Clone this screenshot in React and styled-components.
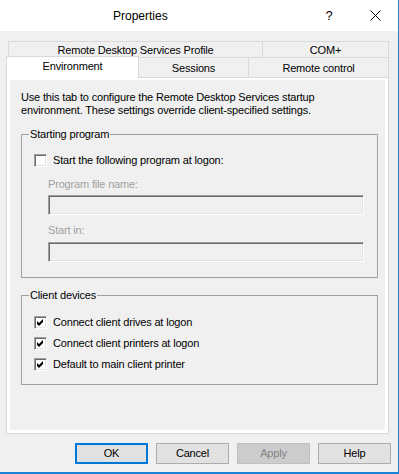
import React from 'react';
import styled, { createGlobalStyle } from 'styled-components';

const Global = createGlobalStyle`
  html, body { margin: 0; padding: 0; background: #f0f0f0; }
  body {
    font-family: "Liberation Sans", Arial, sans-serif;
    font-size: 11px;
    line-height: 13px;
    letter-spacing: -0.17px;
    color: #000;
  }
  * { box-sizing: border-box; }
`;

const Window = styled.div`
  width: 399px;
  height: 474px;
  border-right: 1px solid #1883d7;
  border-bottom: 2px solid #1883d7;
  background: #f0f0f0;
  display: flex;
  flex-direction: column;
`;

const TitleBar = styled.div`
  height: 31px;
  flex: none;
  background: #fff;
  display: flex;
  align-items: center;
`;

const Title = styled.div`
  flex: 1;
  padding-left: 113px;
  font-size: 12px;
  line-height: 14px;
  letter-spacing: 0;
`;

const CaptionButton = styled.div`
  width: 46px;
  height: 31px;
  display: flex;
  align-items: center;
  justify-content: center;
  font-size: 13px;
`;

const Body = styled.div`
  padding: 10px 0 0 6px;
  display: flex;
  flex-direction: column;
`;

const TabRow = styled.div`
  display: flex;
  align-items: flex-end;
  height: ${p => p.$h}px;
  padding-left: ${p => p.$indent}px;
`;

const Tab = styled.div`
  width: ${p => p.$w}px;
  height: ${p => (p.$active ? p.$h + 2 : p.$h)}px;
  margin-left: ${p => (p.$first ? 0 : -1)}px;
  margin-bottom: ${p => (p.$active ? -1 : 0)}px;
  border: 1px solid #d9d9d9;
  border-bottom: none;
  background: ${p => (p.$active ? '#fff' : '#f0f0f0')};
  position: ${p => (p.$active ? 'relative' : 'static')};
  z-index: ${p => (p.$active ? 1 : 'auto')};
  display: flex;
  justify-content: center;
  padding-top: ${p => p.$pt}px;
  white-space: nowrap;
`;

const Panel = styled.div`
  width: 383px;
  height: 357px;
  border: 1px solid #d9d9d9;
  background: #fff;
  padding: 2px 3px 3px 3px;
  display: flex;
`;

const Page = styled.div`
  flex: 1;
  background: #f0f0f0;
  padding: 11px 0 0 11px;
  display: flex;
  flex-direction: column;
`;

const Description = styled.p`
  margin: 0;
  width: 340px;
`;

const GroupBox = styled.fieldset`
  width: 357px;
  margin: ${p => p.$mt}px 0 0 0;
  padding: 0 12px ${p => p.$pb}px 12px;
  border: 1px solid #a0a0a0;
  display: flex;
  flex-direction: column;
  min-width: 0;
`;

const Legend = styled.legend`
  margin-left: -5px;
  padding: 0 1px;
  line-height: 13px;
`;

const CheckRow = styled.label`
  display: flex;
  align-items: center;
  gap: 6px;
  height: 13px;
  margin-top: ${p => p.$mt}px;
`;

const Box = styled.span`
  width: 13px;
  height: 13px;
  flex: none;
  background: #fff;
  border-top: 1px solid #a0a0a0;
  border-left: 1px solid #a0a0a0;
  border-right: 1px solid #fff;
  border-bottom: 1px solid #fff;
  box-shadow: inset 1px 1px 0 #696969, inset -1px -1px 0 #e3e3e3;
  display: flex;
  align-items: center;
  justify-content: center;
`;

const FieldLabel = styled.div`
  margin: ${p => p.$mt}px 0 0 14px;
  color: #a0a0a0;
`;

const Field = styled.div`
  width: 316px;
  height: 20px;
  margin: ${p => p.$mt}px 0 0 14px;
  background: #f0f0f0;
  border-top: 1px solid #a0a0a0;
  border-left: 1px solid #a0a0a0;
  border-right: 1px solid #fff;
  border-bottom: 1px solid #fff;
  box-shadow: inset 1px 1px 0 #696969, inset -1px -1px 0 #e3e3e3;
`;

const ButtonRow = styled.div`
  display: flex;
  justify-content: flex-end;
  gap: 8px;
  margin-top: 9px;
  padding-right: 7px;
`;

const Button = styled.div`
  width: 73px;
  height: 21px;
  display: flex;
  align-items: center;
  justify-content: center;
  background: ${p => (p.$disabled ? '#cccccc' : '#e1e1e1')};
  color: ${p => (p.$disabled ? '#838383' : '#000')};
  border: ${p => (p.$default ? '2px solid #0078d7' : p.$disabled ? '1px solid #bfbfbf' : '1px solid #adadad')};
`;

const Check = ({ checked }) => (
  <Box>
    {checked && (
      <svg width="9" height="9" viewBox="0 0 9 9">
        <polygon points="1,3 3,5 7,1 7,4 3,8 1,6" fill="#000" />
      </svg>
    )}
  </Box>
);

export default function App() {
  return (
    <>
      <Global />
      <Window>
        <TitleBar>
          <Title>Properties</Title>
          <CaptionButton>?</CaptionButton>
          <CaptionButton>
            <svg width="11" height="11" viewBox="0 0 11 11">
              <path d="M0.5 0.5 L10.5 10.5 M10.5 0.5 L0.5 10.5" stroke="#000" strokeWidth="1" />
            </svg>
          </CaptionButton>
        </TitleBar>
        <Body>
          <TabRow $h={16} $indent={2}>
            <Tab $first $w={255} $h={16} $pt={2}>Remote Desktop Services Profile</Tab>
            <Tab $w={127} $h={16} $pt={2}>COM+</Tab>
          </TabRow>
          <TabRow $h={20} $indent={0}>
            <Tab $first $active $w={133} $h={20} $pt={3}>Environment</Tab>
            <Tab $w={111} $h={20} $pt={4}>Sessions</Tab>
            <Tab $w={141} $h={20} $pt={4}>Remote control</Tab>
          </TabRow>
          <Panel>
            <Page>
              <Description>
                Use this tab to configure the Remote Desktop Services startup environment. These settings override client-specified settings.
              </Description>
              <GroupBox $mt={11} $pb={15}>
                <Legend>Starting program</Legend>
                <CheckRow $mt={13}>
                  <Check />
                  <span>Start the following program at logon:</span>
                </CheckRow>
                <FieldLabel $mt={11}>Program file name:</FieldLabel>
                <Field $mt={4} />
                <FieldLabel $mt={9}>Start in:</FieldLabel>
                <Field $mt={5} />
              </GroupBox>
              <GroupBox $mt={11} $pb={13}>
                <Legend>Client devices</Legend>
                <CheckRow $mt={14}>
                  <Check checked />
                  <span>Connect client drives at logon</span>
                </CheckRow>
                <CheckRow $mt={8}>
                  <Check checked />
                  <span>Connect client printers at logon</span>
                </CheckRow>
                <CheckRow $mt={8}>
                  <Check checked />
                  <span>Default to main client printer</span>
                </CheckRow>
              </GroupBox>
            </Page>
          </Panel>
        </Body>
        <ButtonRow>
          <Button $default>OK</Button>
          <Button>Cancel</Button>
          <Button $disabled>Apply</Button>
          <Button>Help</Button>
        </ButtonRow>
      </Window>
    </>
  );
}
